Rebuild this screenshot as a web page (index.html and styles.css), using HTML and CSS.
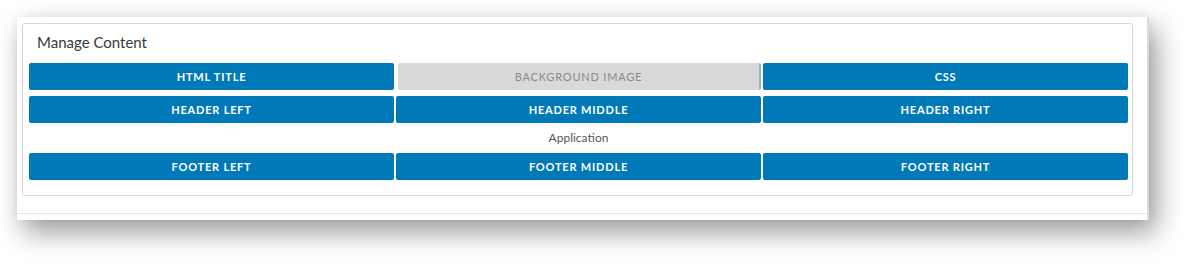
FILE: index.html
```
<!DOCTYPE html>
<html lang="en">
    <head>
        <meta charset="UTF-8">
        <title>Manage Content</title>
        <link rel="stylesheet" href="styles.css">
    </head>
    <body>
        <div class="panel">
            <div class="card">
                <h2 class="card-title">Manage Content</h2>

                <div class="btn-row">
                    <button class="btn">HTML Title</button>
                    <button class="btn disabled">Background Image</button>
                    <button class="btn">CSS</button>
                </div>

                <div class="btn-row">
                    <button class="btn">Header Left</button>
                    <button class="btn">Header Middle</button>
                    <button class="btn">Header Right</button>
                </div>

                <p class="label">Application</p>

                <div class="btn-row">
                    <button class="btn">Footer Left</button>
                    <button class="btn">Footer Middle</button>
                    <button class="btn">Footer Right</button>
                </div>
            </div>
            <div class="panel-footer"></div>
        </div>
    </body>
</html>
```

FILE: styles.css
```
* {
    margin: 0; padding: 0; box-sizing: border-box;
}

html, body {
    width: 100%;
    height: 100%;
    background-color: white;
    font-family: Lato, "Open Sans", sans-serif;
    overflow: hidden;
}

.panel {
    margin: 17px 0 0 17px;
    width: 1132px;
    height: 203px;
    background-color: white;
    border-right: 2px solid #dcdcdc;
    box-shadow: 7px 12px 26px rgba(0, 0, 0, 0.4), 0 0 10px rgba(0, 0, 0, 0.05);
    padding: 6px 0 0 5px;
}

.card {
    width: 1111px;
    height: 173px;
    border: 1px solid #d7d7d7;
    border-radius: 3px;
    padding: 0 4px 0 6px;
}

.card-title {
    font-size: 15px;
    font-weight: 400;
    line-height: 20px;
    color: #3a3a3a;
    padding: 8px 0 0 8px;
    margin-bottom: 11px;
}

.btn-row {
    display: grid;
    grid-template-columns: repeat(3, 1fr);
    gap: 2px;
    margin-bottom: 6px;
}

.btn {
    height: 27px;
    border: none;
    border-radius: 2px;
    background-color: #0079b8;
    color: white;
    font-family: Lato, "Open Sans", sans-serif;
    font-size: 11px;
    font-weight: 700;
    letter-spacing: 0.8px;
    text-transform: uppercase;
}

.btn.disabled {
    background-color: #d9d9d9;
    color: #8a8a8a;
    font-weight: 400;
    margin-left: 2px;
    border-right: 2px solid #9db4c2;
}

.label {
    font-size: 12px;
    line-height: 30px;
    text-align: center;
    color: #565656;
    margin-top: -6px;
}

.panel-footer {
    margin-top: 17px;
    margin-left: -5px;
    border-top: 1px solid #e6e6e6;
}
```
